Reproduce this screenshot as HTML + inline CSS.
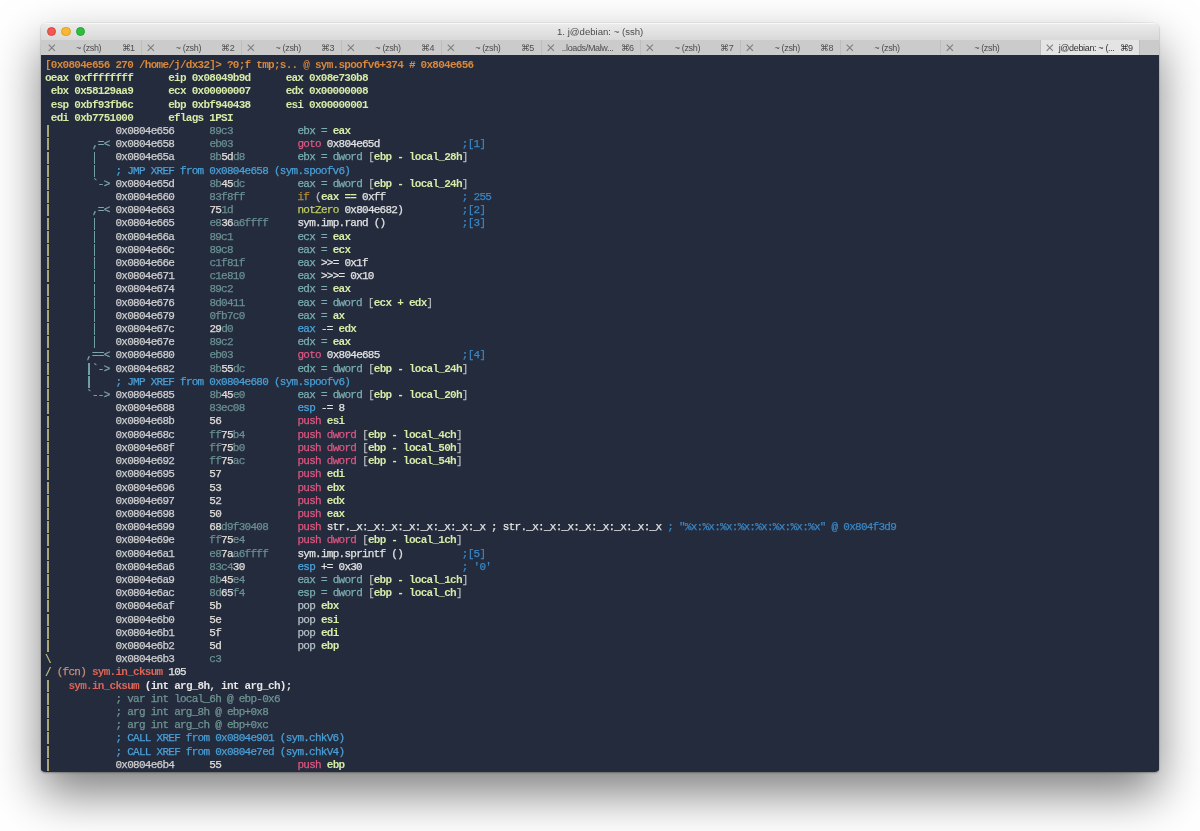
<!DOCTYPE html>
<html><head><meta charset="utf-8">
<style>
html,body{margin:0;padding:0;width:1200px;height:831px;background:#fff;overflow:hidden}
#win{position:absolute;left:40.5px;top:22.5px;width:1118.3px;height:749px;border-radius:5px 5px 4px 4px;
 box-shadow:0 22px 48px rgba(0,0,0,0.5),0 1px 2px rgba(0,0,0,0.25),0 0 0 0.5px rgba(0,0,0,0.08);overflow:hidden;background:linear-gradient(#e8e8e8 0,#e8e8e8 30px,#232b3d 30px)}
#title{position:absolute;left:0;top:0;width:100%;height:17px;background:linear-gradient(#ededed,#e6e6e6 30%,#d9d9d9);box-shadow:inset 0 1px 0 #f7f7f7;border-bottom:0.5px solid #b9b9b9;
 font-family:"Liberation Sans",sans-serif;font-size:9.6px;color:#4c4c4c;text-align:center;line-height:18px;will-change:transform}
.tl{position:absolute;top:3.9px;width:7.6px;height:7.6px;border-radius:50%}
#tabs{position:absolute;left:0;top:17.5px;width:100%;height:15px;background:#cbcbcb;
 font-family:"Liberation Sans",sans-serif;font-size:9px;color:#4e4e4e;will-change:transform}
.tab{position:absolute;top:0;width:99.8px;height:15px;line-height:16.5px;box-shadow:inset -1px 0 0 #bdbdbd}
.tab.act{background:#e4e4e4;color:#333}
.tab .x{position:absolute;left:5px;top:3.8px}
.tab .n{position:absolute;left:0;width:92px;text-align:center;letter-spacing:-0.35px}
.tab .k{position:absolute;left:79px;top:0;letter-spacing:-0.6px}
#term{position:absolute;left:0;top:32.5px;width:100%;height:716px;background:#232b3d}
#txt{position:absolute;left:4.5px;top:4.2px;font-family:"Liberation Mono",monospace;font-size:11px;letter-spacing:-0.732px;-webkit-text-stroke:0.25px;
 white-space:pre;line-height:13.217px;will-change:transform;color:#d0d0d0}
.l{height:13.217px}
b{font-weight:normal}
.O{color:#d9873a;font-weight:bold;-webkit-text-stroke:0}
.L{color:#d6eba8;font-weight:bold;-webkit-text-stroke:0}
.Y{color:#c2bc78;font-weight:bold;-webkit-text-stroke:0;display:inline-block;transform:translateY(0.8px) scaleY(1.2)}
.V,.U{position:relative;color:transparent;-webkit-text-stroke:0}
.V::before{content:"";position:absolute;left:2px;top:0.1px;width:2px;height:12px;background:#aaa676}
.U::before{content:"";position:absolute;left:2.1px;top:0.1px;width:1.4px;height:12px;background:#6f9ea3}
.A{color:#cfcfcf}
.D{color:#6a8f92}
.H{color:#e0dcd6}
.F{color:#7ea7aa}
.X{color:#4a9fd6}
.T{color:#7aaeb0}
.G{color:#d6eca8;font-weight:bold;-webkit-text-stroke:0}
.P{color:#dd5680}
.I{color:#b58d35}
.N{color:#bfcc5e}
.C{color:#3a86c4}
.W{color:#e2e2e2}
.Q{color:#e6e6e6;font-weight:bold;-webkit-text-stroke:0}
.S{color:#b4c2c8}
.B{color:#4aa3dc}
.R{color:#de6556;font-weight:bold;-webkit-text-stroke:0}
.Z{color:#c98f7c}
.M{color:#6f9493}
.K{color:#b8b8b8}
</style></head><body>
<div id="win">
 <div id="title">1. j@debian: ~ (ssh)
  <div class="tl" style="left:5.8px;background:#f05a52;border:0.5px solid #d8463f"></div>
  <div class="tl" style="left:20.4px;background:#f7b932;border:0.5px solid #dba027"></div>
  <div class="tl" style="left:34.8px;background:#30bd42;border:0.5px solid #22a52f"></div>
 </div>
 <div id="tabs">
<div class="tab" style="left:1.60px"><svg class="x" width="8" height="8" viewBox="0 0 8 8"><path d="M0.7 0.7L6.9 6.9M6.9 0.7L0.7 6.9" stroke="#7c7c7c" stroke-width="1.05"/></svg><span class="n">~ (zsh)</span><span class="k">⌘1</span></div>
<div class="tab" style="left:101.40px"><svg class="x" width="8" height="8" viewBox="0 0 8 8"><path d="M0.7 0.7L6.9 6.9M6.9 0.7L0.7 6.9" stroke="#7c7c7c" stroke-width="1.05"/></svg><span class="n">~ (zsh)</span><span class="k">⌘2</span></div>
<div class="tab" style="left:201.20px"><svg class="x" width="8" height="8" viewBox="0 0 8 8"><path d="M0.7 0.7L6.9 6.9M6.9 0.7L0.7 6.9" stroke="#7c7c7c" stroke-width="1.05"/></svg><span class="n">~ (zsh)</span><span class="k">⌘3</span></div>
<div class="tab" style="left:301.00px"><svg class="x" width="8" height="8" viewBox="0 0 8 8"><path d="M0.7 0.7L6.9 6.9M6.9 0.7L0.7 6.9" stroke="#7c7c7c" stroke-width="1.05"/></svg><span class="n">~ (zsh)</span><span class="k">⌘4</span></div>
<div class="tab" style="left:400.80px"><svg class="x" width="8" height="8" viewBox="0 0 8 8"><path d="M0.7 0.7L6.9 6.9M6.9 0.7L0.7 6.9" stroke="#7c7c7c" stroke-width="1.05"/></svg><span class="n">~ (zsh)</span><span class="k">⌘5</span></div>
<div class="tab" style="left:500.60px"><svg class="x" width="8" height="8" viewBox="0 0 8 8"><path d="M0.7 0.7L6.9 6.9M6.9 0.7L0.7 6.9" stroke="#7c7c7c" stroke-width="1.05"/></svg><span class="n">..loads/Malw...</span><span class="k">⌘6</span></div>
<div class="tab" style="left:600.40px"><svg class="x" width="8" height="8" viewBox="0 0 8 8"><path d="M0.7 0.7L6.9 6.9M6.9 0.7L0.7 6.9" stroke="#7c7c7c" stroke-width="1.05"/></svg><span class="n">~ (zsh)</span><span class="k">⌘7</span></div>
<div class="tab" style="left:700.20px"><svg class="x" width="8" height="8" viewBox="0 0 8 8"><path d="M0.7 0.7L6.9 6.9M6.9 0.7L0.7 6.9" stroke="#7c7c7c" stroke-width="1.05"/></svg><span class="n">~ (zsh)</span><span class="k">⌘8</span></div>
<div class="tab" style="left:800.00px"><svg class="x" width="8" height="8" viewBox="0 0 8 8"><path d="M0.7 0.7L6.9 6.9M6.9 0.7L0.7 6.9" stroke="#7c7c7c" stroke-width="1.05"/></svg><span class="n">~ (zsh)</span><span class="k"></span></div>
<div class="tab" style="left:899.80px"><svg class="x" width="8" height="8" viewBox="0 0 8 8"><path d="M0.7 0.7L6.9 6.9M6.9 0.7L0.7 6.9" stroke="#7c7c7c" stroke-width="1.05"/></svg><span class="n">~ (zsh)</span><span class="k"></span></div>
<div class="tab act" style="left:999.60px"><svg class="x" width="8" height="8" viewBox="0 0 8 8"><path d="M0.7 0.7L6.9 6.9M6.9 0.7L0.7 6.9" stroke="#7c7c7c" stroke-width="1.05"/></svg><span class="n">j@debian: ~ (...</span><span class="k">⌘9</span></div>
 </div>
 <div id="term"><div id="txt"><div class="l"><b class="O">[0x0804e656 270 /home/j/dx32]&gt; ?0;f tmp;s.. @ sym.spoofv6+374 # 0x804e656</b></div><div class="l"><b class="L">oeax 0xffffffff      eip 0x08049b9d      eax 0x08e730b8</b></div><div class="l"><b class="L"> ebx 0x58129aa9      ecx 0x00000007      edx 0x00000008</b></div><div class="l"><b class="L"> esp 0xbf93fb6c      ebp 0xbf940438      esi 0x00000001</b></div><div class="l"><b class="L"> edi 0xb7751000      eflags 1PSI</b></div><div class="l"><b class="V">|</b>           <b class="A">0x0804e656</b>      <b class="D">89c3</b>           <b class="T">ebx =</b> <b class="G">eax</b></div><div class="l"><b class="V">|</b>       <b class="F">,=&lt;</b> <b class="A">0x0804e658</b>      <b class="D">eb03</b>           <b class="P">goto</b> <b class="W">0x804e65d</b>              <b class="C">;[1]</b></div><div class="l"><b class="V">|</b>       <b class="U">|</b>   <b class="A">0x0804e65a</b>      <b class="D">8b</b><b class="H">5d</b><b class="D">d8</b>         <b class="T">ebx = dword</b> <b class="K">[</b><b class="G">ebp - local_28h</b><b class="K">]</b></div><div class="l"><b class="V">|</b>       <b class="U">|</b>   <b class="X">; JMP XREF from 0x0804e658 (sym.spoofv6)</b></div><div class="l"><b class="V">|</b>       <b class="F">`-&gt;</b> <b class="A">0x0804e65d</b>      <b class="D">8b</b><b class="H">45</b><b class="D">dc</b>         <b class="T">eax = dword</b> <b class="K">[</b><b class="G">ebp - local_24h</b><b class="K">]</b></div><div class="l"><b class="V">|</b>           <b class="A">0x0804e660</b>      <b class="D">83f8ff</b>         <b class="I">if</b> <b class="K">(</b><b class="G">eax</b> <b class="G">==</b> <b class="W">0xff</b>             <b class="C">; 255</b></div><div class="l"><b class="V">|</b>       <b class="F">,=&lt;</b> <b class="A">0x0804e663</b>      <b class="H">75</b><b class="D">1d</b>           <b class="N">notZero</b> <b class="W">0x804e682)</b>          <b class="C">;[2]</b></div><div class="l"><b class="V">|</b>       <b class="U">|</b>   <b class="A">0x0804e665</b>      <b class="D">e8</b><b class="H">36</b><b class="D">a6ffff</b>     <b class="W">sym.imp.rand ()</b>             <b class="C">;[3]</b></div><div class="l"><b class="V">|</b>       <b class="U">|</b>   <b class="A">0x0804e66a</b>      <b class="D">89c1</b>           <b class="T">ecx =</b> <b class="G">eax</b></div><div class="l"><b class="V">|</b>       <b class="U">|</b>   <b class="A">0x0804e66c</b>      <b class="D">89c8</b>           <b class="T">eax =</b> <b class="G">ecx</b></div><div class="l"><b class="V">|</b>       <b class="U">|</b>   <b class="A">0x0804e66e</b>      <b class="D">c1f81f</b>         <b class="T">eax</b> <b class="W">&gt;&gt;= 0x1f</b></div><div class="l"><b class="V">|</b>       <b class="U">|</b>   <b class="A">0x0804e671</b>      <b class="D">c1e810</b>         <b class="T">eax</b> <b class="W">&gt;&gt;&gt;= 0x10</b></div><div class="l"><b class="V">|</b>       <b class="U">|</b>   <b class="A">0x0804e674</b>      <b class="D">89c2</b>           <b class="T">edx =</b> <b class="G">eax</b></div><div class="l"><b class="V">|</b>       <b class="U">|</b>   <b class="A">0x0804e676</b>      <b class="D">8d0411</b>         <b class="T">eax = dword</b> <b class="K">[</b><b class="G">ecx + edx</b><b class="K">]</b></div><div class="l"><b class="V">|</b>       <b class="U">|</b>   <b class="A">0x0804e679</b>      <b class="D">0fb7c0</b>         <b class="T">eax =</b> <b class="G">ax</b></div><div class="l"><b class="V">|</b>       <b class="U">|</b>   <b class="A">0x0804e67c</b>      <b class="H">29</b><b class="D">d0</b>           <b class="B">eax</b> <b class="W">-=</b> <b class="G">edx</b></div><div class="l"><b class="V">|</b>       <b class="U">|</b>   <b class="A">0x0804e67e</b>      <b class="D">89c2</b>           <b class="T">edx =</b> <b class="G">eax</b></div><div class="l"><b class="V">|</b>      <b class="F">,==&lt;</b> <b class="A">0x0804e680</b>      <b class="D">eb03</b>           <b class="P">goto</b> <b class="W">0x804e685</b>              <b class="C">;[4]</b></div><div class="l"><b class="V">|</b>      <b class="U">|</b><b class="F">`-&gt;</b> <b class="A">0x0804e682</b>      <b class="D">8b</b><b class="H">55</b><b class="D">dc</b>         <b class="T">edx = dword</b> <b class="K">[</b><b class="G">ebp - local_24h</b><b class="K">]</b></div><div class="l"><b class="V">|</b>      <b class="U">|</b>    <b class="X">; JMP XREF from 0x0804e680 (sym.spoofv6)</b></div><div class="l"><b class="V">|</b>      <b class="F">`--&gt;</b> <b class="A">0x0804e685</b>      <b class="D">8b</b><b class="H">45</b><b class="D">e0</b>         <b class="T">eax = dword</b> <b class="K">[</b><b class="G">ebp - local_20h</b><b class="K">]</b></div><div class="l"><b class="V">|</b>           <b class="A">0x0804e688</b>      <b class="D">83ec08</b>         <b class="B">esp</b> <b class="W">-= 8</b></div><div class="l"><b class="V">|</b>           <b class="A">0x0804e68b</b>      <b class="H">56</b>             <b class="P">push</b> <b class="G">esi</b></div><div class="l"><b class="V">|</b>           <b class="A">0x0804e68c</b>      <b class="D">ff</b><b class="H">75</b><b class="D">b4</b>         <b class="P">push dword</b> <b class="K">[</b><b class="G">ebp - local_4ch</b><b class="K">]</b></div><div class="l"><b class="V">|</b>           <b class="A">0x0804e68f</b>      <b class="D">ff</b><b class="H">75</b><b class="D">b0</b>         <b class="P">push dword</b> <b class="K">[</b><b class="G">ebp - local_50h</b><b class="K">]</b></div><div class="l"><b class="V">|</b>           <b class="A">0x0804e692</b>      <b class="D">ff</b><b class="H">75</b><b class="D">ac</b>         <b class="P">push dword</b> <b class="K">[</b><b class="G">ebp - local_54h</b><b class="K">]</b></div><div class="l"><b class="V">|</b>           <b class="A">0x0804e695</b>      <b class="H">57</b>             <b class="P">push</b> <b class="G">edi</b></div><div class="l"><b class="V">|</b>           <b class="A">0x0804e696</b>      <b class="H">53</b>             <b class="P">push</b> <b class="G">ebx</b></div><div class="l"><b class="V">|</b>           <b class="A">0x0804e697</b>      <b class="H">52</b>             <b class="P">push</b> <b class="G">edx</b></div><div class="l"><b class="V">|</b>           <b class="A">0x0804e698</b>      <b class="H">50</b>             <b class="P">push</b> <b class="G">eax</b></div><div class="l"><b class="V">|</b>           <b class="A">0x0804e699</b>      <b class="H">68</b><b class="D">d9f30408</b>     <b class="P">push</b> <b class="W">str._x:_x:_x:_x:_x:_x:_x:_x ; str._x:_x:_x:_x:_x:_x:_x:_x</b><b class="C"> ; &quot;%x:%x:%x:%x:%x:%x:%x:%x&quot; @ 0x804f3d9</b></div><div class="l"><b class="V">|</b>           <b class="A">0x0804e69e</b>      <b class="D">ff</b><b class="H">75</b><b class="D">e4</b>         <b class="P">push dword</b> <b class="K">[</b><b class="G">ebp - local_1ch</b><b class="K">]</b></div><div class="l"><b class="V">|</b>           <b class="A">0x0804e6a1</b>      <b class="D">e8</b><b class="H">7a</b><b class="D">a6ffff</b>     <b class="W">sym.imp.sprintf ()</b>          <b class="C">;[5]</b></div><div class="l"><b class="V">|</b>           <b class="A">0x0804e6a6</b>      <b class="D">83c4</b><b class="H">30</b>         <b class="B">esp</b> <b class="W">+= 0x30</b>                 <b class="C">; &#x27;0&#x27;</b></div><div class="l"><b class="V">|</b>           <b class="A">0x0804e6a9</b>      <b class="D">8b</b><b class="H">45</b><b class="D">e4</b>         <b class="T">eax = dword</b> <b class="K">[</b><b class="G">ebp - local_1ch</b><b class="K">]</b></div><div class="l"><b class="V">|</b>           <b class="A">0x0804e6ac</b>      <b class="D">8d</b><b class="H">65</b><b class="D">f4</b>         <b class="T">esp = dword</b> <b class="K">[</b><b class="G">ebp - local_ch</b><b class="K">]</b></div><div class="l"><b class="V">|</b>           <b class="A">0x0804e6af</b>      <b class="H">5b</b>             <b class="S">pop</b> <b class="G">ebx</b></div><div class="l"><b class="V">|</b>           <b class="A">0x0804e6b0</b>      <b class="H">5e</b>             <b class="S">pop</b> <b class="G">esi</b></div><div class="l"><b class="V">|</b>           <b class="A">0x0804e6b1</b>      <b class="H">5f</b>             <b class="S">pop</b> <b class="G">edi</b></div><div class="l"><b class="V">|</b>           <b class="A">0x0804e6b2</b>      <b class="H">5d</b>             <b class="S">pop</b> <b class="G">ebp</b></div><div class="l"><b class="Y">\</b>           <b class="A">0x0804e6b3</b>      <b class="D">c3</b></div><div class="l"><b class="Y">/</b> <b class="Z">(fcn)</b> <b class="R">sym.in_cksum</b> <b class="W">105</b></div><div class="l"><b class="V">|</b>   <b class="R">sym.in_cksum</b> <b class="Q">(int arg_8h, int arg_ch);</b></div><div class="l"><b class="V">|</b>           <b class="M">; var int local_6h @ ebp-0x6</b></div><div class="l"><b class="V">|</b>           <b class="M">; arg int arg_8h @ ebp+0x8</b></div><div class="l"><b class="V">|</b>           <b class="M">; arg int arg_ch @ ebp+0xc</b></div><div class="l"><b class="V">|</b>           <b class="X">; CALL XREF from 0x0804e901 (sym.chkV6)</b></div><div class="l"><b class="V">|</b>           <b class="X">; CALL XREF from 0x0804e7ed (sym.chkV4)</b></div><div class="l"><b class="V">|</b>           <b class="A">0x0804e6b4</b>      <b class="H">55</b>             <b class="P">push</b> <b class="G">ebp</b></div></div></div>
</div>
</body></html>
